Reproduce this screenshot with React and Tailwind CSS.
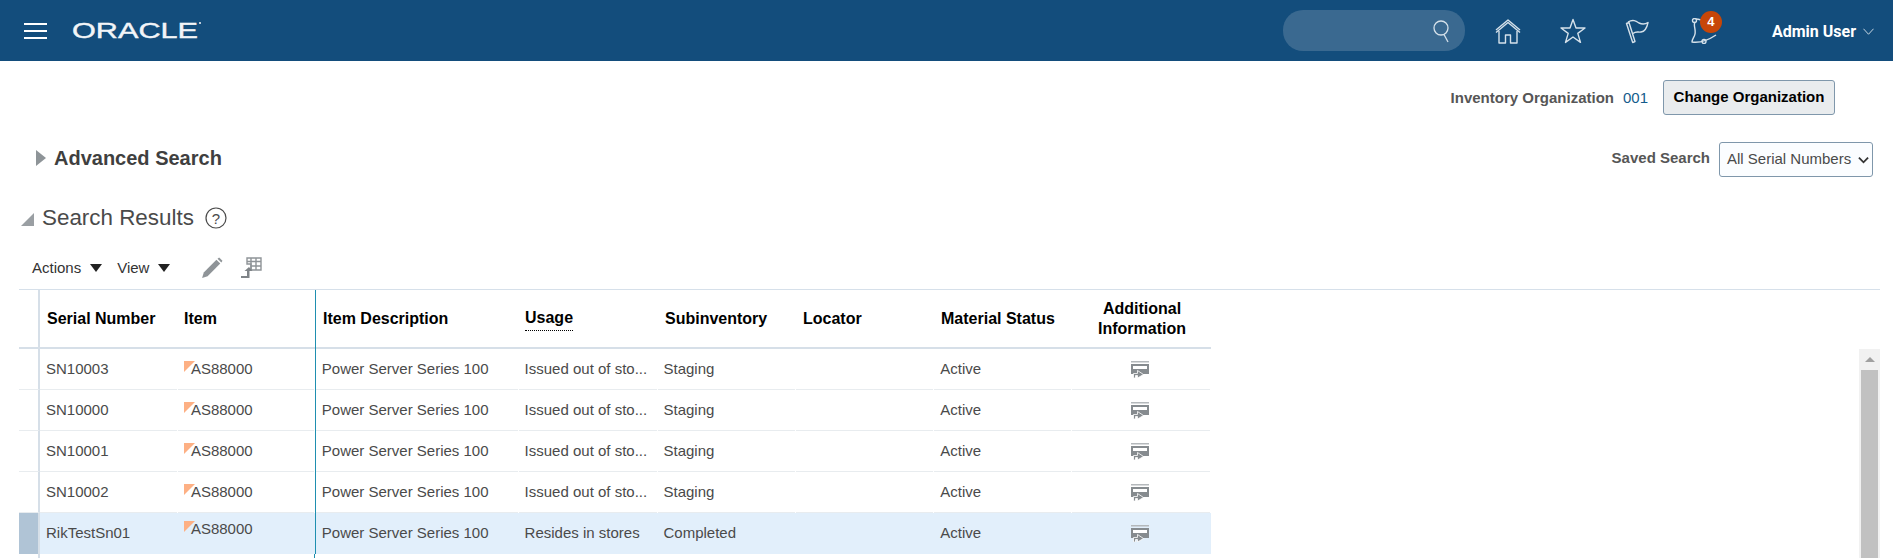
import React from 'react';

const rows = [
    { serial: 'SN10003', usage: 'Issued out of sto...', sub: 'Staging' },
    { serial: 'SN10000', usage: 'Issued out of sto...', sub: 'Staging' },
    { serial: 'SN10001', usage: 'Issued out of sto...', sub: 'Staging' },
    { serial: 'SN10002', usage: 'Issued out of sto...', sub: 'Staging' },
    { serial: 'RikTestSn01', usage: 'Resides in stores', sub: 'Completed', selected: true },
];

function NavIcon({ children, className }) {
    return (
        <svg viewBox="1 1 26 26" fill="none" stroke="#d5e1ea" strokeWidth="1.400" strokeLinejoin="round" className={className}>
            {children}
        </svg>
    );
}

function InfoIcon() {
    return (
        <svg viewBox="0 0 18 17" className="w-[18px] h-[17px] -ml-[2px]">
            <rect x="0" y="0" width="18" height="1.500" fill="#b4b8bb" />
            <rect x="0" y="3" width="18" height="10" fill="#868b8f" />
            <rect x="2" y="5" width="14" height="3" fill="#fff" />
            <path d="M2.500 17v-4.500h4V9.500l6 4-6 3.500v-2.500H4.500V17z" fill="#868b8f" stroke="#fff" strokeWidth="0.800" />
        </svg>
    );
}

function Row({ row }) {
    const bg = row.selected ? 'bg-[#e2effb]' : 'bg-white';
    const line = row.selected ? 'border-[#e2effb]' : 'border-[#e8ecef]';
    const cell = `border-b ${line} flex items-center h-full mr-px`;
    return (
        <div className={`flex h-[41px] text-[15px] text-[#4a4a4a] ${bg}`}>
            <div className={`w-[21px] shrink-0 border-r-2 border-r-[#d6dfe8] ${row.selected ? 'bg-[#b0c4d6]' : 'border-b border-b-[#e8ecef]'}`} />
            <div className={`${cell} w-[137px] pl-[6px]`}>{row.serial}</div>
            <div className={`${cell} w-[136px] pl-[6px] relative`}>
                <span className={`absolute left-[6px] w-0 h-0 border-t-[11px] border-r-[11px] border-t-[#fdb084] border-r-transparent ${row.selected ? 'top-[8px]' : 'top-[12px]'}`} />
                <span className={`pl-[7px] ${row.selected ? 'pb-[7px]' : ''}`}>AS88000</span>
            </div>
            <div className="border-l border-[#1f8fb0] h-full" />
            <div className={`${cell} w-[202px] pl-[6px]`}>Power Server Series 100</div>
            <div className={`${cell} w-[138px] pl-[6px]`}>{row.usage}</div>
            <div className={`${cell} w-[138px] pl-[6px]`}>{row.sub}</div>
            <div className={`${cell} w-[137px]`} />
            <div className={`${cell} w-[137px] pl-[6px]`}>Active</div>
            <div className={`${cell} w-[138px] justify-center mr-0`}>
                <InfoIcon />
            </div>
        </div>
    );
}

export default function App() {
    return (
        <div className="h-[558px] overflow-hidden bg-white" style={{ fontFamily: '"Liberation Sans", Arial, sans-serif' }}>
            <header className="h-[61px] bg-[#134d7c] flex items-center pl-[24px] pr-[19px]">
                <div className="w-[23px] flex flex-col gap-[5px] mt-[1px]">
                    <span className="h-[2px] bg-white" />
                    <span className="h-[2px] bg-white" />
                    <span className="h-[2px] bg-white" />
                </div>
                <svg viewBox="0 0 130 26" className="w-[130px] h-[26px] ml-[25px] mb-[1px]">
                    <text x="0" y="21" fill="#f2f5f8" stroke="#f2f5f8" strokeWidth="0.400" fontSize="22.500" fontFamily="Liberation Sans" textLength="126" lengthAdjust="spacingAndGlyphs">ORACLE</text>
                    <circle cx="128" cy="6" r="1" fill="#f2f5f8" />
                </svg>
                <div className="ml-auto w-[182px] h-[41px] rounded-[20px] bg-[#3a6990] flex items-center justify-end pr-[13px]">
                    <svg viewBox="0 0 20 24" fill="none" stroke="#d5e1ea" strokeWidth="1.300" className="w-[20px] h-[24px]">
                        <circle cx="9" cy="9" r="7" />
                        <path d="M12 15.500 16 23" />
                    </svg>
                </div>
                <NavIcon className="w-[26px] h-[26px] ml-[30px]">
                    <path d="M2 13 14 3l12 10M2 15.500 14 5.500l12 10" />
                    <path d="M5 14v12h6.500v-8h5v8H23V14" />
                </NavIcon>
                <NavIcon className="w-[26px] h-[26px] ml-[39px]">
                    <path d="M14 2.500 17 11h9l-7.200 5.400 2.700 9L14 20l-7.500 5.400 2.700-9L2 11h9z" />
                </NavIcon>
                <NavIcon className="w-[26px] h-[26px] ml-[39px]">
                    <path d="M2.500 6.500 5 5.500l6 19-2.300 1z" />
                    <path d="M4 5c5-3 8-1 11 1 3 1.500 6 1.500 9-.5-1 5-3 9-7 9.500-3 .5-5-1-8 1.500" />
                </NavIcon>
                <div className="relative w-[26px] h-[26px] ml-[40px]">
                    <NavIcon className="w-[26px] h-[26px]">
                        <path d="M5 5c-2 3 1 7 0 12-.5 3-3 5-3 8 7 1 15-1 24-7" />
                        <path d="M6 2c4 0 8 2 12 4" />
                        <circle cx="4.500" cy="3.500" r="2" />
                        <circle cx="14" cy="24.500" r="2" />
                    </NavIcon>
                    <span className="absolute -top-[7px] left-[9px] w-[22px] h-[22px] rounded-full bg-[#c74608] text-white text-[13px] font-bold flex items-center justify-center">4</span>
                </div>
                <span className="ml-[55px] mt-[2px] text-white text-[16px] font-bold" style={{ fontFamily: 'Roboto, sans-serif' }}>Admin User</span>
                <svg viewBox="0 0 12 7" fill="none" stroke="#d5e1ea" className="w-[11px] h-[7px] ml-[7px] mt-[2px]">
                    <path d="M.5.5 6 6.500 11.500.5" />
                </svg>
            </header>

            <div className="flex items-center justify-end h-[35px] mt-[19px] pr-[58px]">
                <span className="text-[15px] font-bold text-[#565656] mt-[1px]">Inventory Organization</span>
                <span className="text-[15px] text-[#145c8c] ml-[9px] mt-[1px]">001</span>
                <button className="ml-[15px] w-[172px] h-[35px] rounded-[3px] border border-[#7f97ab] bg-[#e9ecee] text-[15px] font-bold text-black">Change Organization</button>
            </div>

            <div className="flex items-center h-[35px] mt-[25px] pl-[36px] pr-[20px]">
                <span className="w-0 h-0 border-y-[8px] border-l-[10px] border-y-transparent border-l-[#8e9498]" />
                <h2 className="ml-[8px] text-[20px] font-bold text-[#3f3f3f]">Advanced Search</h2>
                <span className="ml-auto mt-[2px] text-[15px] font-bold text-[#565656]">Saved Search</span>
                <div className="ml-[9px] w-[154px] h-[35px] mt-[4px] rounded-[3px] border border-[#7f97ab] bg-[#fbfdff] flex items-center justify-between pl-[7px] pr-[3px] text-[15px] text-[#4a4a4a]">
                    All Serial Numbers
                    <svg viewBox="0 0 12 8" fill="none" stroke="#333" strokeWidth="2" className="w-[11px] h-[8px]">
                        <path d="M1 1.500 6 6.500 11 1.500" />
                    </svg>
                </div>
            </div>

            <div className="flex items-center h-[30px] mt-[28px] pl-[21px]">
                <span className="w-0 h-0 border-b-[13px] border-l-[13px] border-b-[#9a9fa3] border-l-transparent mt-[2px]" />
                <h2 className="ml-[8px] text-[22.400px] text-[#4a4a4a]">Search Results</h2>
                <svg viewBox="0 0 22 22" className="w-[22px] h-[22px] ml-[11px]">
                    <circle cx="11" cy="11" r="10" fill="none" stroke="#4a4a4a" strokeWidth="1.200" />
                    <text x="11" y="16.500" textAnchor="middle" fontSize="15" fill="#4a4a4a" fontFamily="Liberation Sans">?</text>
                </svg>
            </div>

            <div className="flex items-center h-[24px] mt-[23px] pl-[32px] text-[15px] text-[#333]">
                <span>Actions</span>
                <span className="ml-[9px] w-0 h-0 border-x-[6px] border-t-[8px] border-x-transparent border-t-[#222]" />
                <span className="ml-[15px]">View</span>
                <span className="ml-[9px] w-0 h-0 border-x-[6px] border-t-[8px] border-x-transparent border-t-[#222]" />
                <svg viewBox="0 0 20 20" className="w-[22px] h-[22px] ml-[31px]">
                    <path d="M1 19l1.500-5L14 2.500l3.500 3.500L6 17.500z" fill="#8f9498" />
                    <path d="M15 1.500l1.500-1 3 3-1 1.500z" fill="#8f9498" />
                </svg>
                <svg viewBox="0 0 22 22" className="w-[22px] h-[22px] ml-[17px]">
                    <path d="M7 1h14v12H11V7H7z" fill="none" stroke="#8f9498" strokeWidth="1.400" />
                    <path d="M7 4.500h14M11 1v12M16 1v12M11 9h10" stroke="#8f9498" strokeWidth="1.400" />
                    <path d="M1 21v-2h6v-5l-2.500 0L9 10l3.500 4H9.500v7z" fill="#7f8488" />
                </svg>
            </div>

            <div className="ml-[19px] mr-[13px] mt-[9px] border-t border-[#d6e0ea]">
                <div className="flex h-[59px] text-[16px] font-bold text-black">
                    <div className="w-[21px] shrink-0 border-r-2 border-[#d6dfe8] border-b-2 border-b-[#d6dfe8]" />
                    <div className="w-[138px] pl-[7px] flex items-center border-b-2 border-[#d6dfe8]">Serial Number</div>
                    <div className="w-[137px] pl-[6px] flex items-center border-b-2 border-[#d6dfe8]">Item</div>
                    <div className="border-l border-[#1f8fb0]" />
                    <div className="w-[203px] pl-[7px] flex items-center border-b-2 border-[#d6dfe8]">Item Description</div>
                    <div className="w-[139px] pl-[6px] flex items-center border-b-2 border-[#d6dfe8]">
                        <span className="border-b border-dotted border-black">Usage</span>
                    </div>
                    <div className="w-[139px] pl-[7px] flex items-center border-b-2 border-[#d6dfe8]">Subinventory</div>
                    <div className="w-[138px] pl-[6px] flex items-center border-b-2 border-[#d6dfe8]">Locator</div>
                    <div className="w-[138px] pl-[6px] flex items-center border-b-2 border-[#d6dfe8]">Material Status</div>
                    <div className="w-[138px] flex items-center justify-center text-center leading-[20px] border-b-2 border-[#d6dfe8]">Additional<br />Information</div>
                </div>
                <div className="flex justify-between">
                    <div className="w-[1192px] h-[210px]">
                        {rows.map((row) => (
                            <Row key={row.serial} row={row} />
                        ))}
                        <div className="flex h-[5px]">
                            <div className="w-[21px] border-r-2 border-[#d6dfe8]" />
                            <div className="w-[275px] border-r border-[#1f8fb0]" />
                        </div>
                    </div>
                    <div className="w-[21px] h-[210px] bg-[#f1f1f1] flex flex-col items-center">
                        <div className="h-[21px] flex items-center">
                            <span className="w-0 h-0 border-x-[5px] border-b-[5px] border-x-transparent border-b-[#a0a0a0]" />
                        </div>
                        <div className="w-[17px] flex-1 bg-[#c1c1c1]" />
                    </div>
                </div>
            </div>
        </div>
    );
}
